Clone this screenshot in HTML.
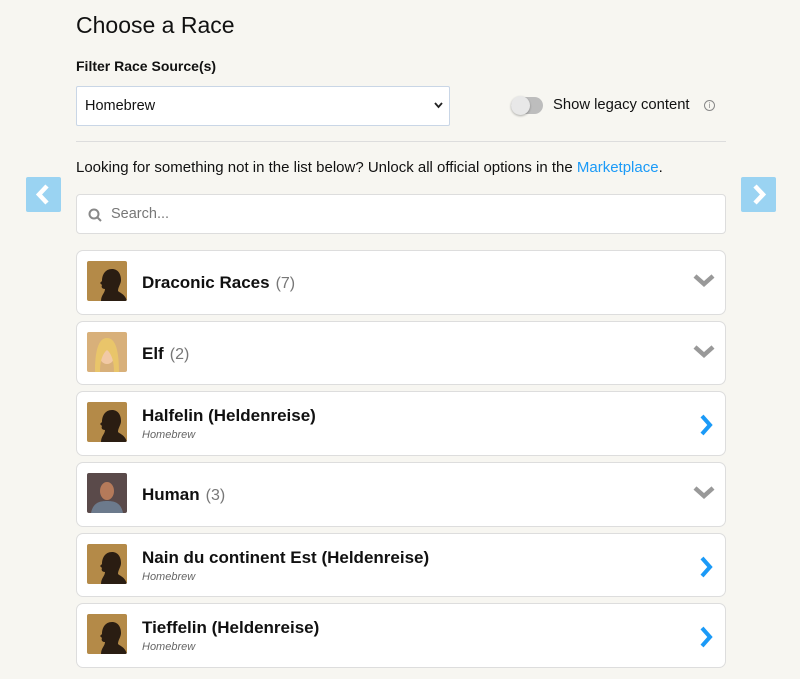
<!DOCTYPE html>
<html><head><style>
*{box-sizing:border-box;margin:0;padding:0}
body{width:800px;height:679px;overflow:hidden;background:#f7f6f1;font-family:"Liberation Sans",sans-serif;color:#111;position:relative}
.a{position:absolute}
h1{position:absolute;left:76px;top:12px;font-size:23px;font-weight:normal;color:#111}
.lbl{left:76px;top:58px;font-size:14px;font-weight:bold}
.sel{left:76px;top:86px;width:374px;height:40px;background:#fff;border:1px solid #c9d6e6;border-radius:2px;font-size:14.5px;padding:11px 8px}
.tog{left:511px;top:97px;width:32px;height:17px;border-radius:9px;background:#bdbdbd}
.tog::after{content:"";position:absolute;left:0;top:-1px;width:19px;height:19px;border-radius:50%;background:#e8e8e8;box-shadow:0 1px 2px rgba(0,0,0,.3)}
.leg{left:553px;top:97px;font-size:14.8px}
.info{left:704px;top:100px;width:11px;height:11px;border:1px solid #888;border-radius:50%;font-size:8px;color:#888;text-align:center;line-height:9px}
.hr{left:76px;top:141px;width:650px;height:1px;background:#ddd}
.msg{left:76px;top:159px;font-size:15px}
.msg span{color:#1b9af7}
.nav{top:177px;width:35px;height:35px;background:#9ad3f2;border-radius:2px}
.srch{left:76px;top:194px;width:650px;height:40px;background:#fff;border:1px solid #ddd;border-radius:4px;font-size:14.5px;color:#777;padding:11px 0 0 34px}
.row{left:76px;width:650px;background:#fff;border:1px solid #ddd;border-radius:7px}
.av{position:absolute;left:10px;top:10px;width:40px;height:40px;border-radius:2px;background:#b48a48;overflow:hidden}
.nm{position:absolute;left:65px;font-size:17px;font-weight:bold}
.nm i{font-weight:normal;font-style:normal;color:#777;font-size:16px;margin-left:6px}
.sub{position:absolute;left:65px;top:37px;font-size:11px;font-style:italic;color:#666}
.ic{position:absolute;right:10px;top:22px}
</style></head><body>
<h1>Choose a Race</h1>
<div class="a lbl">Filter Race Source(s)</div>
<div class="a sel">Homebrew<svg style="position:absolute;right:6px;top:15px" width="9" height="7" viewBox="0 0 9 7"><path d="M1 1l3.5 4L8 1" stroke="#222" stroke-width="1.8" fill="none"/></svg></div>
<div class="a tog"></div>
<div class="a leg">Show legacy content</div>
<div class="a info">i</div>
<div class="a hr"></div>
<div class="a msg">Looking for something not in the list below? Unlock all official options in the <span>Marketplace</span>.</div>
<div class="a nav" style="left:26px"><svg width="35" height="35"><path d="M21 9l-8 8.5 8 8.5" stroke="#fff" stroke-width="4.5" fill="none"/></svg></div>
<div class="a nav" style="left:741px"><svg width="35" height="35"><path d="M14 9l8 8.5-8 8.5" stroke="#fff" stroke-width="4.5" fill="none"/></svg></div>
<div class="a srch"><svg style="position:absolute;left:11px;top:13px" width="14" height="14"><circle cx="6" cy="6" r="4.5" stroke="#888" stroke-width="2" fill="none"/><path d="M9 9l4 4" stroke="#888" stroke-width="2"/></svg>Search...</div>

<div class="a row" style="top:250px;height:65px"><div class="av"><svg width="40" height="40"><path d="M14 40c0-6 4-8 4-12-3 0-4-2-3-4l-2-2 2-2c0-6 3-12 10-12 6 0 9 5 9 11 0 4-3 7-3 11 2 2 7 3 9 10z" fill="#2a1d12"/></svg></div><div class="nm" style="top:22px">Draconic Races<i>(7)</i></div><svg class="ic" width="22" height="16"><path d="M2 3l9 8 9-8" stroke="#999" stroke-width="4.5" fill="none"/></svg></div>
<div class="a row" style="top:321px;height:64px"><div class="av" style="background:#d8b07a"><svg width="40" height="40"><ellipse cx="20" cy="22" rx="8" ry="10" fill="#f1c9a5"/><path d="M8 40c0-20 3-34 12-34s12 14 12 34h-5c0-10-2-18-7-22-5 4-7 12-7 22z" fill="#e9c56a"/></svg></div><div class="nm" style="top:22px">Elf<i>(2)</i></div><svg class="ic" width="22" height="16"><path d="M2 3l9 8 9-8" stroke="#999" stroke-width="4.5" fill="none"/></svg></div>
<div class="a row" style="top:391px;height:65px"><div class="av"><svg width="40" height="40"><path d="M14 40c0-6 4-8 4-12-3 0-4-2-3-4l-2-2 2-2c0-6 3-12 10-12 6 0 9 5 9 11 0 4-3 7-3 11 2 2 7 3 9 10z" fill="#2a1d12"/></svg></div><div class="nm" style="top:14px">Halfelin (Heldenreise)</div><div class="sub">Homebrew</div><svg class="ic" width="16" height="22"><path d="M3 2l8 9-8 9" stroke="#1b9af7" stroke-width="4" fill="none"/></svg></div>
<div class="a row" style="top:462px;height:65px"><div class="av" style="background:#5a4a4a"><svg width="40" height="40"><ellipse cx="20" cy="18" rx="7" ry="9" fill="#b57a5a"/><path d="M4 40c2-10 8-12 16-12s14 2 16 12z" fill="#6c7a8c"/></svg></div><div class="nm" style="top:22px">Human<i>(3)</i></div><svg class="ic" width="22" height="16"><path d="M2 3l9 8 9-8" stroke="#999" stroke-width="4.5" fill="none"/></svg></div>
<div class="a row" style="top:533px;height:64px"><div class="av"><svg width="40" height="40"><path d="M14 40c0-6 4-8 4-12-3 0-4-2-3-4l-2-2 2-2c0-6 3-12 10-12 6 0 9 5 9 11 0 4-3 7-3 11 2 2 7 3 9 10z" fill="#2a1d12"/></svg></div><div class="nm" style="top:14px">Nain du continent Est (Heldenreise)</div><div class="sub">Homebrew</div><svg class="ic" width="16" height="22"><path d="M3 2l8 9-8 9" stroke="#1b9af7" stroke-width="4" fill="none"/></svg></div>
<div class="a row" style="top:603px;height:65px"><div class="av"><svg width="40" height="40"><path d="M14 40c0-6 4-8 4-12-3 0-4-2-3-4l-2-2 2-2c0-6 3-12 10-12 6 0 9 5 9 11 0 4-3 7-3 11 2 2 7 3 9 10z" fill="#2a1d12"/></svg></div><div class="nm" style="top:14px">Tieffelin (Heldenreise)</div><div class="sub">Homebrew</div><svg class="ic" width="16" height="22"><path d="M3 2l8 9-8 9" stroke="#1b9af7" stroke-width="4" fill="none"/></svg></div>
</body></html>
